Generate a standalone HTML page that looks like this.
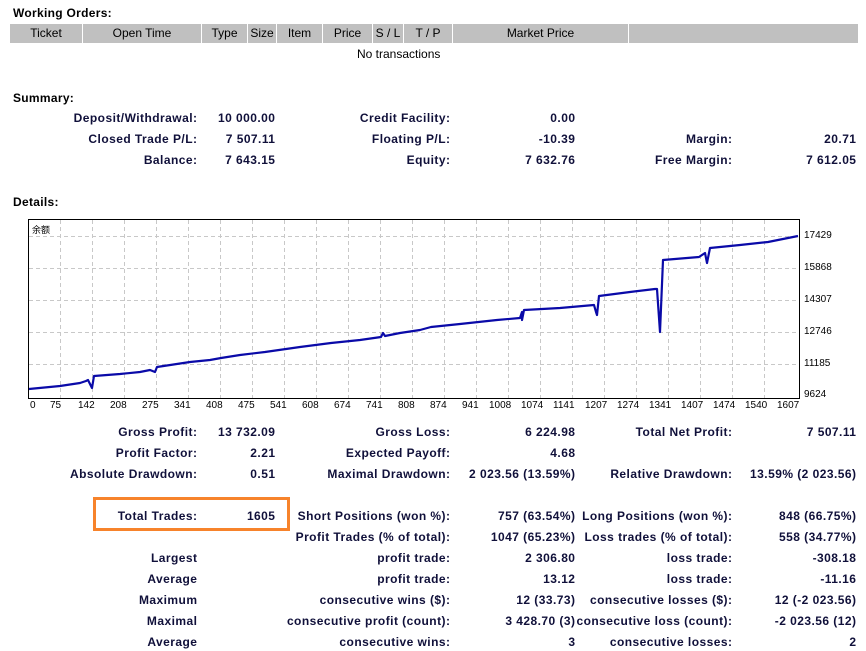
<!DOCTYPE html>
<html><head><meta charset="utf-8"><style>
body{margin:0;width:866px;height:651px;background:#fff;position:relative;overflow:hidden;font-family:"Liberation Sans","Noto Sans CJK SC",sans-serif;font-size:12px;color:#10103a}
.h{position:absolute;left:13px;font-weight:bold;color:#000;letter-spacing:0.3px}
.r{position:absolute;white-space:nowrap;font-weight:bold;letter-spacing:0.45px;margin-right:-0.45px}
.a{right:669px}.b{right:591px}.c{right:416px}.d{right:291px}.e{right:134px}.f{right:10px}
.th{position:absolute;top:24px;height:19px;background:#c0c0c0;font-size:12px;color:#000;text-align:center;line-height:19px;border-right:1px solid #fff;box-sizing:border-box}
.xl{position:absolute;top:400px;font-size:10px;color:#000}
.yl{position:absolute;left:804px;font-size:10px;color:#000}
</style></head><body>
<div class="h" style="top:6px">Working Orders:</div>
<div class="th" style="left:10px;width:73px">Ticket</div>
<div class="th" style="left:83px;width:119px">Open Time</div>
<div class="th" style="left:202px;width:46px">Type</div>
<div class="th" style="left:248px;width:29px">Size</div>
<div class="th" style="left:277px;width:46px">Item</div>
<div class="th" style="left:323px;width:50px">Price</div>
<div class="th" style="left:373px;width:31px">S / L</div>
<div class="th" style="left:404px;width:49px">T / P</div>
<div class="th" style="left:453px;width:176px">Market Price</div>
<div class="th" style="left:629px;width:229px;border-right:none"></div>
<div style="position:absolute;top:47px;left:357px;color:#000">No transactions</div>

<div class="h" style="top:91px">Summary:</div>
<div class="r a" style="top:111px">Deposit/Withdrawal:</div><div class="r b" style="top:111px">10 000.00</div>
<div class="r c" style="top:111px">Credit Facility:</div><div class="r d" style="top:111px">0.00</div>
<div class="r a" style="top:132px">Closed Trade P/L:</div><div class="r b" style="top:132px">7 507.11</div>
<div class="r c" style="top:132px">Floating P/L:</div><div class="r d" style="top:132px">-10.39</div>
<div class="r e" style="top:132px">Margin:</div><div class="r f" style="top:132px">20.71</div>
<div class="r a" style="top:153px">Balance:</div><div class="r b" style="top:153px">7 643.15</div>
<div class="r c" style="top:153px">Equity:</div><div class="r d" style="top:153px">7 632.76</div>
<div class="r e" style="top:153px">Free Margin:</div><div class="r f" style="top:153px">7 612.05</div>

<div class="h" style="top:195px">Details:</div>
<svg style="position:absolute;left:0;top:0" width="866" height="420">
<rect x="28.5" y="219.5" width="771" height="179" fill="#fff" stroke="#000"/>
<g stroke="#c8c8c8" stroke-dasharray="4,3">
<line x1="29" x2="799" y1="236.5" y2="236.5"/><line x1="29" x2="799" y1="268.5" y2="268.5"/><line x1="29" x2="799" y1="300.5" y2="300.5"/><line x1="29" x2="799" y1="332.5" y2="332.5"/><line x1="29" x2="799" y1="364.5" y2="364.5"/>
<line x1="60.5" x2="60.5" y1="220" y2="398"/><line x1="92.5" x2="92.5" y1="220" y2="398"/><line x1="124.5" x2="124.5" y1="220" y2="398"/><line x1="156.5" x2="156.5" y1="220" y2="398"/><line x1="188.5" x2="188.5" y1="220" y2="398"/><line x1="220.5" x2="220.5" y1="220" y2="398"/><line x1="252.5" x2="252.5" y1="220" y2="398"/><line x1="284.5" x2="284.5" y1="220" y2="398"/><line x1="316.5" x2="316.5" y1="220" y2="398"/><line x1="348.5" x2="348.5" y1="220" y2="398"/><line x1="380.5" x2="380.5" y1="220" y2="398"/><line x1="412.5" x2="412.5" y1="220" y2="398"/><line x1="444.5" x2="444.5" y1="220" y2="398"/><line x1="476.5" x2="476.5" y1="220" y2="398"/><line x1="508.5" x2="508.5" y1="220" y2="398"/><line x1="540.5" x2="540.5" y1="220" y2="398"/><line x1="572.5" x2="572.5" y1="220" y2="398"/><line x1="604.5" x2="604.5" y1="220" y2="398"/><line x1="636.5" x2="636.5" y1="220" y2="398"/><line x1="668.5" x2="668.5" y1="220" y2="398"/><line x1="700.5" x2="700.5" y1="220" y2="398"/><line x1="732.5" x2="732.5" y1="220" y2="398"/><line x1="764.5" x2="764.5" y1="220" y2="398"/>
</g>
<polyline fill="none" stroke="#0a0aa8" stroke-width="2.2" stroke-linejoin="round" points="29,389 60,386 80,383 86,381 88,380 90,384 92,388 94,376 120,374 140,372 150,370 155,372 157,367 190,362 210,360 221,358 240,355 265,352 300,347 331,343 360,340 381,337 383,333 385,336 400,333 420,330 431,327 460,324 497,320 520,318 522,312 522,320 524,310 560,308 594,305 596,312 597,315 599,296 630,292 655,289 657,289 660,332 663,260 699,257 705,253 707,263 710,248 740,245 768,242 798,236"/>
</svg>
<div style="position:absolute;left:32px;top:223px;font-size:9px;color:#000">余额</div>
<div class="yl" style="top:230px">17429</div><div class="yl" style="top:262px">15868</div><div class="yl" style="top:294px">14307</div><div class="yl" style="top:326px">12746</div><div class="yl" style="top:358px">11185</div><div class="yl" style="top:389px">9624</div>
<div class="xl" style="left:30px">0</div><div class="xl" style="left:50px">75</div><div class="xl" style="left:78px">142</div><div class="xl" style="left:110px">208</div><div class="xl" style="left:142px">275</div><div class="xl" style="left:174px">341</div><div class="xl" style="left:206px">408</div><div class="xl" style="left:238px">475</div><div class="xl" style="left:270px">541</div><div class="xl" style="left:302px">608</div><div class="xl" style="left:334px">674</div><div class="xl" style="left:366px">741</div><div class="xl" style="left:398px">808</div><div class="xl" style="left:430px">874</div><div class="xl" style="left:462px">941</div><div class="xl" style="left:489px">1008</div><div class="xl" style="left:521px">1074</div><div class="xl" style="left:553px">1141</div><div class="xl" style="left:585px">1207</div><div class="xl" style="left:617px">1274</div><div class="xl" style="left:649px">1341</div><div class="xl" style="left:681px">1407</div><div class="xl" style="left:713px">1474</div><div class="xl" style="left:745px">1540</div><div class="xl" style="left:777px">1607</div>

<div class="r a" style="top:425px">Gross Profit:</div><div class="r b" style="top:425px">13 732.09</div>
<div class="r c" style="top:425px">Gross Loss:</div><div class="r d" style="top:425px">6 224.98</div>
<div class="r e" style="top:425px">Total Net Profit:</div><div class="r f" style="top:425px">7 507.11</div>
<div class="r a" style="top:446px">Profit Factor:</div><div class="r b" style="top:446px">2.21</div>
<div class="r c" style="top:446px">Expected Payoff:</div><div class="r d" style="top:446px">4.68</div>
<div class="r a" style="top:467px">Absolute Drawdown:</div><div class="r b" style="top:467px">0.51</div>
<div class="r c" style="top:467px">Maximal Drawdown:</div><div class="r d" style="top:467px">2 023.56 (13.59%)</div>
<div class="r e" style="top:467px">Relative Drawdown:</div><div class="r f" style="top:467px">13.59% (2 023.56)</div>

<div style="position:absolute;left:93px;top:497px;width:191px;height:28px;border:3px solid #f7832b"></div>
<div class="r a" style="top:509px">Total Trades:</div><div class="r b" style="top:509px">1605</div>
<div class="r c" style="top:509px">Short Positions (won %):</div><div class="r d" style="top:509px">757 (63.54%)</div>
<div class="r e" style="top:509px">Long Positions (won %):</div><div class="r f" style="top:509px">848 (66.75%)</div>
<div class="r c" style="top:530px">Profit Trades (% of total):</div><div class="r d" style="top:530px">1047 (65.23%)</div>
<div class="r e" style="top:530px">Loss trades (% of total):</div><div class="r f" style="top:530px">558 (34.77%)</div>
<div class="r a" style="top:551px">Largest</div>
<div class="r c" style="top:551px">profit trade:</div><div class="r d" style="top:551px">2 306.80</div>
<div class="r e" style="top:551px">loss trade:</div><div class="r f" style="top:551px">-308.18</div>
<div class="r a" style="top:572px">Average</div>
<div class="r c" style="top:572px">profit trade:</div><div class="r d" style="top:572px">13.12</div>
<div class="r e" style="top:572px">loss trade:</div><div class="r f" style="top:572px">-11.16</div>
<div class="r a" style="top:593px">Maximum</div>
<div class="r c" style="top:593px">consecutive wins ($):</div><div class="r d" style="top:593px">12 (33.73)</div>
<div class="r e" style="top:593px">consecutive losses ($):</div><div class="r f" style="top:593px">12 (-2 023.56)</div>
<div class="r a" style="top:614px">Maximal</div>
<div class="r c" style="top:614px">consecutive profit (count):</div><div class="r d" style="top:614px">3 428.70 (3)</div>
<div class="r e" style="top:614px">consecutive loss (count):</div><div class="r f" style="top:614px">-2 023.56 (12)</div>
<div class="r a" style="top:635px">Average</div>
<div class="r c" style="top:635px">consecutive wins:</div><div class="r d" style="top:635px">3</div>
<div class="r e" style="top:635px">consecutive losses:</div><div class="r f" style="top:635px">2</div>
</body></html>
